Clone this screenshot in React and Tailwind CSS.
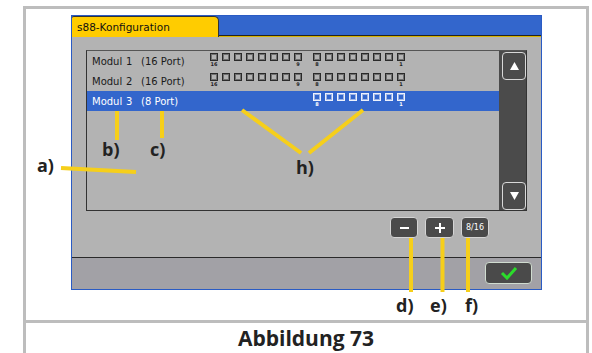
import React from "react";

const screenFont = { fontFamily: '"DejaVu Sans", Verdana, sans-serif' };
const labelFont = { fontFamily: '"Open Sans", "Noto Sans", sans-serif' };

function PortGroup({ first, last, active }) {
  const box = active
    ? "border-[#eef2fc] bg-[#3366cc] shadow-[inset_0_0_0_1px_#9db4e8]"
    : "border-[#2a2a2a] bg-[#b3b3b3] shadow-[inset_0_0_0_1px_#707070]";
  const text = active ? "text-white" : "text-[#222]";
  return (
    <div className="flex gap-[4px]">
      {Array.from({ length: 8 }).map((_, i) => (
        <div key={i} className="relative w-[8px] h-[8px]">
          <div className={`w-[8px] h-[8px] border ${box}`} />
          {(i === 0 || i === 7) && (
            <span
              className={`absolute top-[9px] left-1/2 -translate-x-1/2 text-[5px] leading-[5px] font-bold ${text}`}
            >
              {i === 0 ? first : last}
            </span>
          )}
        </div>
      ))}
    </div>
  );
}

function ModuleRow({ nr, ports, active }) {
  return (
    <div
      className={`flex h-[20px] pl-[5px] ${
        active ? "bg-[#3366cc] text-white" : "text-[#1a1a1a]"
      }`}
    >
      <span className="w-[34px] self-center text-[10px]">Modul</span>
      <span className="w-[15px] self-center text-[10px]">{nr}</span>
      <span className="w-[69px] self-center text-[10px]">({ports} Port)</span>
      <div className="mt-[2px] flex gap-[11px]">
        {ports === 16 ? (
          <PortGroup first="16" last="9" />
        ) : (
          <div className="w-[92px]" />
        )}
        <PortGroup first="8" last="1" active={active} />
      </div>
    </div>
  );
}

function ScrollButton({ down }) {
  return (
    <div className="w-[24px] h-[28px] rounded-[4px] border border-[#d8d8d8] bg-[#4b4b4b] flex items-center justify-center">
      <svg width="9" height="8" viewBox="0 0 9 8">
        <polygon
          points={down ? "0,0 9,0 4.5,8" : "4.5,0 9,8 0,8"}
          fill="#ffffff"
        />
      </svg>
    </div>
  );
}

function SmallButton({ children, w }) {
  return (
    <div
      className={`${w} h-[21px] rounded-[4px] border border-[#d4d4d4] bg-[#4a4a4a] text-white flex items-center justify-center`}
    >
      {children}
    </div>
  );
}

function Screen() {
  return (
    <div
      className="w-[471px] h-[275px] border border-[#2a5bc4] flex flex-col bg-[#b3b3b3]"
      style={screenFont}
    >
      <div className="h-[21px] flex bg-[#3366cc]">
        <div className="w-[147px] h-[21px] bg-[#ffcc00] border-t border-r border-[#333] rounded-tr-[5px] rounded-tl-[2px] pl-[5px] pt-[3px] text-[10.5px] leading-[14px] text-[#111]">
          s88-Konfiguration
        </div>
        <div className="flex-1 self-end h-[2px] bg-[#222] border-b border-[#d8b400]" />
      </div>

      <div className="h-[220px] pl-[14px] pr-[14px] pt-[13px]">
        <div className="w-[441px] h-[161px] border border-[#333] border-t-[#555] flex">
          <div className="flex-1 flex flex-col">
            <ModuleRow nr="1" ports={16} />
            <ModuleRow nr="2" ports={16} />
            <ModuleRow nr="3" ports={8} active />
          </div>
          <div className="w-[27px] bg-[#4b4b4b] flex flex-col justify-between items-end pt-[1px]">
            <ScrollButton />
            <ScrollButton down />
          </div>
        </div>
        <div className="mt-[6px] flex justify-end pr-[38px] gap-[7px]">
          <SmallButton w="w-[28px]">
            <div className="w-[9px] h-[2px] bg-white" />
          </SmallButton>
          <SmallButton w="w-[29px]">
            <svg width="10" height="10" viewBox="0 0 10 10">
              <rect x="0" y="4" width="10" height="2" fill="#fff" />
              <rect x="4" y="0" width="2" height="10" fill="#fff" />
            </svg>
          </SmallButton>
          <SmallButton w="w-[28px]">
            <span className="text-[8px] leading-none">8/16</span>
          </SmallButton>
        </div>
      </div>

      <div className="flex-1 border-t border-[#2a2a2a] bg-[#a2a1a6] flex justify-end pt-[4px] pr-[9px]">
        <div className="w-[47px] h-[22px] rounded-[4px] border border-[#d0dcd0] bg-[#4a4a4a] flex items-center justify-center">
          <svg width="18" height="14" viewBox="0 0 18 14">
            <polyline
              points="2,7 7,12 16,2"
              fill="none"
              stroke="#2bdc2b"
              strokeWidth="3"
              strokeLinejoin="miter"
            />
          </svg>
        </div>
      </div>
    </div>
  );
}

function Callouts() {
  const c = "#f6cf1a";
  const lines = [
    [61, 168, 136, 172],
    [117, 111, 117, 140],
    [162, 111, 162, 138],
    [242, 110, 301, 153],
    [309, 153, 363, 110],
    [411, 238, 411, 292],
    [442.5, 238, 442.5, 292],
    [468, 238, 468, 292],
  ];
  const labels = [
    ["a)", 37, 156],
    ["b)", 102, 140],
    ["c)", 150, 140],
    ["h)", 296, 158],
    ["d)", 396, 296],
    ["e)", 430, 296],
    ["f)", 465, 296],
  ];
  return (
    <>
      <svg className="absolute inset-0" width="592" height="353">
        {lines.map(([x1, y1, x2, y2], i) => (
          <line key={i} x1={x1} y1={y1} x2={x2} y2={y2} stroke={c} strokeWidth="4" />
        ))}
      </svg>
      {labels.map(([t, x, y]) => (
        <span
          key={t}
          className="absolute text-[18px] leading-[18px] font-bold text-[#222]"
          style={{ ...labelFont, left: x, top: y }}
        >
          {t}
        </span>
      ))}
    </>
  );
}

export default function App() {
  return (
    <div className="relative w-[592px] h-[353px] bg-white overflow-hidden">
      <div className="ml-[23px] mt-[6px] w-[566px] h-[347px] border-x-[3px] border-t-[3px] border-[#bdbdbd] flex flex-col">
        <div className="h-[311px] pl-[45px] pt-[6px]">
          <Screen />
        </div>
        <div className="h-[3px] bg-[#bdbdbd]" />
        <div
          className="flex-1 flex justify-center pt-[5px] text-[21px] leading-[21px] font-bold text-[#222]"
          style={labelFont}
        >
          Abbildung 73
        </div>
      </div>
      <Callouts />
    </div>
  );
}
